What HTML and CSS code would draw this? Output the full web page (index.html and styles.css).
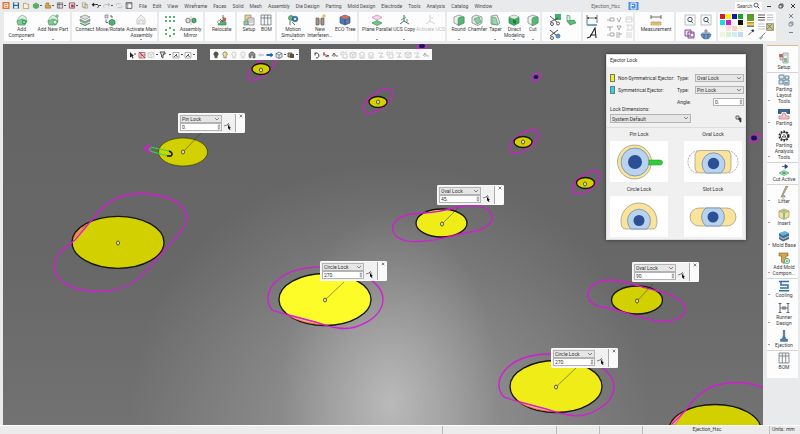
FILE: index.html
```
<!DOCTYPE html>
<html lang="en">
<head>
  <meta charset="UTF-8" />
  <meta name="viewport" content="width=device-width, initial-scale=1.0"/>
  <title>Ejection_Hsc</title>
  <link rel="stylesheet" href="styles.css">
</head>
<body>
  <svg class="defs" aria-hidden="true">
    <!-- general -->
    <symbol id="chev" viewBox="0 0 6 4"><path d="M1 1l2 2 2-2" fill="none" stroke="#555" stroke-width=".7"/></symbol>
    <symbol id="spin" viewBox="0 0 4 8"><path d="M0 0h4v8H0z" fill="#e4e4e4"/><path d="M.8 3L2 1.4 3.2 3zM.8 5L2 6.6 3.2 5z" fill="#333"/><path d="M0 4h4" stroke="#aaa" stroke-width=".4"/></symbol>
    <symbol id="pick" viewBox="0 0 8 8"><path d="M0 4l3-1 2-2M3 3h3" stroke="#555" stroke-width=".7" fill="none"/><path d="M4 3l3 3H5.800l.7 1.600-1 .4L5 6.500 4 7z" fill="#111"/></symbol>
    <symbol id="cursor" viewBox="0 0 8 8"><path d="M1 1l4 4H3.500l1 2-1 .4-.800-2L1 6.500z" fill="#222"/><path d="M5 2l2 2M7 2L5 4" stroke="#b55" stroke-width=".7"/></symbol>
    <symbol id="redbox" viewBox="0 0 8 8"><path d="M1 1.500h6v5.500H1zM3 1.500V7M3 4h4" fill="#f6e4e4" stroke="#a44" stroke-width=".7"/><path d="M1 1l6 6" stroke="#a22" stroke-width=".8"/></symbol>
    <symbol id="faint" viewBox="0 0 8 8"><path d="M1 2l3-1 3 1v4L4 7 1 6zM1 2l3 1.500L7 2M4 3.500V7" fill="#f3f3f3" stroke="#c2c2c2" stroke-width=".7"/></symbol>
    <symbol id="faint2" viewBox="0 0 8 8"><path d="M1 1h3v3H1zM5 3h2v4H3V5M5 1h2" fill="none" stroke="#c4c4c4" stroke-width=".8"/></symbol>
    <symbol id="faint3" viewBox="0 0 8 8"><path d="M1 3l3-2 3 2M2 3v4h4V3M4 4v3" fill="none" stroke="#c4c4c4" stroke-width=".8"/></symbol>
    <symbol id="faint4" viewBox="0 0 8 8"><path d="M1 2h5L4 4v3M2 6h5" fill="none" stroke="#c4c4c4" stroke-width=".8"/></symbol>
    <symbol id="filter" viewBox="0 0 8 8"><path d="M1 1h5L4 4v3L2.500 6V4zM4 4l3-2" fill="#ddd" stroke="#333" stroke-width=".8"/></symbol>
    <symbol id="boxsel" viewBox="0 0 8 8"><path d="M1 1.500h6V7H1z" fill="#fff" stroke="#666" stroke-width=".5"/><path d="M2 6l3-3M4 4l1.500 2" stroke="#222" stroke-width=".8"/></symbol>
    <symbol id="bulb" viewBox="0 0 8 8"><path d="M4 .8a2.300 2.300 0 0 1 1.200 4.200v1.800H2.800V5A2.300 2.300 0 0 1 4 .8z" fill="currentColor" stroke="#444" stroke-width=".5"/></symbol>
    <symbol id="bulb0" viewBox="0 0 8 8"><path d="M4 .8a2.300 2.300 0 0 1 1.200 4.200v1.800H2.800V5A2.300 2.300 0 0 1 4 .8z" fill="#f2f2f2" stroke="#bbb" stroke-width=".6"/></symbol>
    <symbol id="hide" viewBox="0 0 8 8"><path d="M1 6V3l2-2h2l2 2v4H5V4H3v3z" fill="#8a9689" stroke="#444" stroke-width=".6"/></symbol>
    <symbol id="left" viewBox="0 0 8 8"><path d="M1 4l2.500-2v1.300H7v1.400H3.500V6z" fill="#bcd"/></symbol>
    <symbol id="right" viewBox="0 0 8 8"><path d="M7.500 4L4.500 1.500V3H.5v2h4v1.500z" fill="#1d62b5"/></symbol>
    <symbol id="cube" viewBox="0 0 8 8"><path d="M1 2.500L4 1l3 1.500v3.500L4 7.500 1 6zM1 2.500L4 4l3-1.500M4 4v3.500" fill="#e8eef2" stroke="#345" stroke-width=".6"/></symbol>
    <symbol id="render" viewBox="0 0 8 8"><path d="M1 2h4v4H1z" fill="#b99a5a" stroke="#333" stroke-width=".7"/><path d="M3 3h4v4H3z" fill="#554" /></symbol>
    <symbol id="turn" viewBox="0 0 8 8"><path d="M2 2.500a2.500 2.500 0 1 1 1 4.500M2 4.500V1.500" fill="none" stroke="#333" stroke-width=".9"/></symbol>
    <symbol id="axis" viewBox="0 0 8 8"><path d="M2 1v4M4 3v3l2-2M1 3h2" fill="none" stroke="#a23a3a" stroke-width=".9"/><path d="M5 4l1 3 1-3z" fill="#444"/></symbol>
    <symbol id="snap" viewBox="0 0 8 8"><path d="M1 5l2-3 2 3h2M3 2v4" fill="none" stroke="#555" stroke-width=".8"/></symbol>

    <!-- quick access bar -->
    <symbol id="app" viewBox="0 0 8 8"><path d="M0 0h8v8H0z" fill="#d9742b"/><path d="M2 2h4v4H2z" fill="none" stroke="#fff" stroke-width=".9"/><path d="M3 4h3" stroke="#fff"/></symbol>
    <symbol id="save" viewBox="0 0 8 8"><path d="M.5.500h7v7h-7z" fill="#2a6a94"/><path d="M2 .5h4V3H2zM2 4.500h4v3H2z" fill="#e9f1f5"/></symbol>
    <symbol id="doc" viewBox="0 0 8 8"><path d="M1 1.500h3l1 1h2v5H1z" fill="#f9f0dc" stroke="#9a7b3e" stroke-width=".7"/></symbol>
    <symbol id="gpart" viewBox="0 0 8 8"><path d="M1 3l3-2 3 2v3L4 7.500 1 6z" fill="#61bd78" stroke="#2d7a43" stroke-width=".6"/><path d="M1 3l3 1.500L7 3M4 4.500v3" fill="none" stroke="#2d7a43" stroke-width=".5"/></symbol>
    <symbol id="opart" viewBox="0 0 8 8"><path d="M2 1h3v3h2v3H1V4z" fill="#d3a64a" stroke="#7d6125" stroke-width=".6"/></symbol>
    <symbol id="sheet" viewBox="0 0 8 8"><path d="M1 1h6v6H1zM1 3h6M3 1v6" fill="#dfe3e0" stroke="#444" stroke-width=".7"/></symbol>
    <symbol id="rsheet" viewBox="0 0 8 8"><path d="M1 1h6v6H1z" fill="#efdada" stroke="#7a3140" stroke-width=".8"/><path d="M3 3h3v3H3z" fill="#a33a4d"/></symbol>
    <symbol id="copy" viewBox="0 0 8 8"><path d="M1 1h4v5H1zM3 3h4v4H3z" fill="#f7ecd6" stroke="#8c7956" stroke-width=".6"/></symbol>
    <symbol id="undo" viewBox="0 0 8 8"><path d="M2 3h3a2 2 0 0 1 2 3.500" fill="none" stroke="#222" stroke-width="1.100"/><path d="M0 3l3-2.500v5z" fill="#222"/></symbol>
    <symbol id="redo" viewBox="0 0 8 8"><path d="M6 3H3a2 2 0 0 0-2 3.500" fill="none" stroke="#bbb"/><path d="M8 3L5 .5v5z" fill="#bbb"/></symbol>
    <symbol id="cycle" viewBox="0 0 8 8"><path d="M1 4V2h5M7 4v2.500H2" fill="none" stroke="#bbb" stroke-width=".9"/></symbol>
    <symbol id="panel" viewBox="0 0 8 8"><path d="M.7.700h6.600v6.600H.7z" fill="#fff" stroke="#333" stroke-width=".8"/><path d="M.7 2h6.600M2.500 2v5" stroke="#333" stroke-width=".6"/></symbol>
    <symbol id="bluedoc" viewBox="0 0 10 8"><path d="M0 0h10v8H0z" fill="#4b8fdd"/><path d="M2.500 1h5v6h-5zM2.500 3.500h3" fill="none" stroke="#fff" stroke-width=".9"/></symbol>
    <symbol id="loupe" viewBox="0 0 8 8"><circle cx="3.500" cy="3.500" r="2.300" fill="none" stroke="#333" stroke-width=".9"/><path d="M5.200 5.200L7.300 7.300" stroke="#333"/></symbol>
    <symbol id="min" viewBox="0 0 6 6"><path d="M1 3.500h4" stroke="currentColor" stroke-width=".9"/></symbol>
    <symbol id="max" viewBox="0 0 6 6"><path d="M1 2h3v3H1zM2 2V1h3v3H4" fill="none" stroke="currentColor" stroke-width=".7"/></symbol>
    <symbol id="close" viewBox="0 0 6 6"><path d="M1 1l4 4M5 1L1 5" stroke="currentColor" stroke-width=".9"/></symbol>

    <!-- ribbon -->
    <symbol id="addcomp" viewBox="0 0 12 12"><path d="M1 7l2-4 3-2 4 2 1 4-2 3H3z" fill="#d9efdf" stroke="#6a9f7c" stroke-width=".6"/><path d="M1 7l5-2 5 2-2 4H2z" fill="#7fcb94" stroke="#3c8a55" stroke-width=".6"/><circle cx="8" cy="8" r="2.200" fill="#2f9e50"/><path d="M8 6.800v2.400M6.800 8h2.400" stroke="#fff" stroke-width=".6"/></symbol>
    <symbol id="newpart" viewBox="0 0 12 12"><path d="M1 7l2-4 3-2 4 2 1 4-2 3H3z" fill="#d9efdf" stroke="#6a9f7c" stroke-width=".6"/><path d="M1 7l5-2 5 2-2 4H2z" fill="#7fcb94" stroke="#3c8a55" stroke-width=".6"/><circle cx="8" cy="8" r="2" fill="#fff" stroke="#2f9e50" stroke-width=".8"/><path d="M10 0v4M8 2h4" stroke="#4caf6b" stroke-width=".9"/></symbol>
    <symbol id="connect" viewBox="0 0 12 12"><path d="M1 3l5-2 5 2-5 2.500z" fill="#dfe4e2" stroke="#68756f" stroke-width=".6"/><path d="M1 5l5 2.500L11 5v2L6 9.500 1 7z" fill="#9da9a3" stroke="#5f6b66" stroke-width=".5"/><path d="M1 9l5 2.300L11 9" fill="none" stroke="#3faa60" stroke-width="1.200"/></symbol>
    <symbol id="move" viewBox="0 0 12 12"><path d="M1 1h3v3H1z" fill="#d9dedb" stroke="#667" stroke-width=".6"/><path d="M5 7l3-2 3 2v3l-3 1.500L5 10z" fill="#4fb26c" stroke="#27743f" stroke-width=".6"/><path d="M2 5.500v3h2M6 2h2v2" fill="none" stroke="#444" stroke-width=".8"/></symbol>
    <symbol id="actmain" viewBox="0 0 12 12"><path d="M2 10V5l4-4 4 4v5zM4 10V6h4v4" fill="#f1f1f1" stroke="#c4c4c4" stroke-width=".9"/></symbol>
    <symbol id="pattern" viewBox="0 0 12 24"><g fill="#59b277"><path d="M1 1h2v2H1zM5 1h2v2H5zM9 1h2v2H9zM1 5h2v2H1zM5 5h2v2H5zM9 5h2v2H9zM5 12h2v2H5zM1 14h2v2H1zM9 14h2v2H9zM1 18h2v2H1zM9 18h2v2H9zM5 20h2v2H5z"/></g></symbol>
    <symbol id="mirror" viewBox="0 0 12 12"><path d="M1 5l2-1 2 1v3L3 9 1 8z" fill="#e2e5e3" stroke="#555" stroke-width=".7"/><path d="M7 5l2-1 2 1v3L9 9 7 8z" fill="#4caf6b" stroke="#27743f" stroke-width=".7"/><path d="M6 2v9" stroke="#777" stroke-width=".4"/></symbol>
    <symbol id="relocate" viewBox="0 0 12 12"><path d="M3 8l3-1.500L10 8v3H2z" fill="#52b56f" stroke="#2c7d46" stroke-width=".6"/><path d="M7 1v6M4 5l3 3" stroke="#3f4f48" stroke-width=".8"/><path d="M7 3l3 1v3H7z" fill="#cf5a52"/><circle cx="3" cy="8" r="1.500" fill="#fff" stroke="#555" stroke-width=".5"/></symbol>
    <symbol id="setup" viewBox="0 0 12 12"><path d="M2 1h6v5H2z" fill="#e6d39b" stroke="#857445" stroke-width=".6"/><path d="M5 4h6v7H5z" fill="#edf0ef" stroke="#666" stroke-width=".6"/><path d="M1 7h4v4H1z" fill="#9cc9a8" stroke="#4a7e58" stroke-width=".6"/><path d="M6 6h4M6 8h4" stroke="#888" stroke-width=".6"/></symbol>
    <symbol id="setup2" viewBox="0 0 12 12"><path d="M5 1h5v10H5z" fill="#eef0ef" stroke="#777" stroke-width=".6"/><path d="M6 6h3v4H6z" fill="#7cc08d"/><path d="M1 2h4v3H1z" fill="#c9685c"/><path d="M2 5h3v3H2z" fill="#d6dcd8" stroke="#777" stroke-width=".5"/><path d="M6 3h3" stroke="#888" stroke-width=".6"/></symbol>
    <symbol id="bom" viewBox="0 0 12 12"><path d="M1 1h10v10H1zM1 4h10M4.300 1v10M7.700 1v10" fill="#f7f8f8" stroke="#5c666b" stroke-width=".7"/></symbol>
    <symbol id="motion" viewBox="0 0 12 12"><circle cx="4" cy="4" r="2.500" fill="#67b97f" stroke="#2e6f46" stroke-width=".6"/><circle cx="8" cy="5" r="2.800" fill="#3f7fb8" stroke="#234f7b" stroke-width=".6"/><circle cx="8" cy="5" r="1" fill="#fff"/><path d="M3 7v4M5 8l3 3" stroke="#555" stroke-width=".9"/></symbol>
    <symbol id="interf" viewBox="0 0 12 12"><path d="M2 4h3v7H2zM7 4h3v7H7z" fill="#8e9aa0" stroke="#4c565b" stroke-width=".6"/><path d="M5 5h2v5H5z" fill="#e0a443"/><path d="M10 0v4M8 2h4" stroke="#e5b52d" stroke-width="1"/></symbol>
    <symbol id="eco" viewBox="0 0 12 12"><path d="M1 3l5-2 5 2v6l-5 2-5-2z" fill="#4d78b0" stroke="#2a4a78" stroke-width=".6"/><path d="M1 3l5-2 5 2-5 2z" fill="#dc6b5c"/><path d="M6 5v6" stroke="#223d66" stroke-width=".6"/><path d="M7 7l3 2" stroke="#e06d55"/></symbol>
    <symbol id="parallel" viewBox="0 0 12 12"><path d="M1 3.500L6 1l5 2.500L6 6z" fill="#f7ddef" stroke="#d078b0" stroke-width=".7"/><path d="M1 9l5-2.500L11 9l-5 2.500z" fill="#71c58a" stroke="#379355" stroke-width=".7"/></symbol>
    <symbol id="ucs" viewBox="0 0 12 12"><path d="M6 1v6l-4 3M6 7l5 3" fill="none" stroke="#456" stroke-width=".9"/><path d="M3 6l5-3M9 5v3" stroke="#3fa05d" stroke-width=".9"/></symbol>
    <symbol id="ucs0" viewBox="0 0 12 12"><path d="M6 1v6l-4 3M6 7l5 3M8 3v2" fill="none" stroke="#ccc" stroke-width=".9"/></symbol>
    <symbol id="solid" viewBox="0 0 12 12"><path d="M1 3l5-2 5 2v6l-5 2.500L1 9z" fill="#edf1ee" stroke="#61706a" stroke-width=".6"/><path d="M5 4.500Q6 2 11 3v6l-6 2.500z" fill="#56b877" stroke="#3b8a57" stroke-width=".5"/></symbol>
    <symbol id="chamfer" viewBox="0 0 12 12"><path d="M1 3l4-2 6 2v6l-4 2.500L1 9z" fill="#e2e7e4" stroke="#61706a" stroke-width=".6"/><path d="M3 5l5-2 2 5-4 2z" fill="#8bcf9f" stroke="#3b8a57" stroke-width=".5"/></symbol>
    <symbol id="taper" viewBox="0 0 12 12"><path d="M2 2l6-1 3 8-3 2-6-1z" fill="#e2e7e4" stroke="#61706a" stroke-width=".6"/><path d="M3 3l4 1 2 7-6-1z" fill="#9bd8ad" stroke="#3b8a57" stroke-width=".5"/></symbol>
    <symbol id="direct" viewBox="0 0 12 12"><path d="M1 3l5-2 5 2v6l-5 2.500L1 9z" fill="#3fae63" stroke="#2c6d44" stroke-width=".6"/><path d="M1 3l5-2 5 2-5 2z" fill="#e5eae7"/><path d="M5 5l3 2v3L5 9z" fill="#1f7c40"/></symbol>
    <symbol id="scissors" viewBox="0 0 12 12"><path d="M6 0h6v6H6z" fill="#45ae66"/><path d="M1 2l7 6M1 8l8-4" stroke="#333" stroke-width=".8"/><circle cx="3" cy="10" r="1.500" fill="none" stroke="#333" stroke-width=".8"/><circle cx="9" cy="9.500" r="1.500" fill="none" stroke="#333" stroke-width=".8"/></symbol>
    <symbol id="scissorb" viewBox="0 0 12 12"><path d="M1 2l7 6M1 8l8-6" stroke="#333" stroke-width=".9"/><circle cx="3" cy="10" r="1.500" fill="none" stroke="#333" stroke-width=".8"/><circle cx="9" cy="8" r="2" fill="#5b9ace" stroke="#2f618c" stroke-width=".7"/></symbol>
    <symbol id="fold" viewBox="0 0 12 12"><path d="M2 1l3 1v6L2 7z" fill="#d7efdd" stroke="#4e9a66" stroke-width=".7"/><path d="M2 7l7-1 2 3-6 2z" fill="#5cba79" stroke="#2e7f48" stroke-width=".6"/></symbol>
    <symbol id="dim" viewBox="0 0 12 12"><path d="M1 1v10M11 1v8M1 4h10" fill="none" stroke="#333" stroke-width=".7"/><path d="M1 4l2-1v2zM11 4L9 3v2z" fill="#333"/><path d="M1 10h10v2H1z" fill="#6ba6c4"/></symbol>
    <symbol id="bigA" viewBox="0 0 12 12"><path d="M1 11l3-1L9 1l1 10M4 8h5" fill="none" stroke="#222" stroke-width="1.100"/></symbol>
    <symbol id="annot" viewBox="0 0 27 24"><g fill="none" stroke="#888" stroke-width=".7"><path d="M1 5h3M4 3h4v3H4zM11 3l2 4 2-5M1 12h6M4 12v4M11 11l2 4 2-4zM1 20h2M4 18h4v3H4zM11 17v6M13 17v6M16 19h-3"/></g><g fill="none" stroke="#ccc" stroke-width=".8"><path d="M20 2h6v5h-6zM20 4h6M20 10h6v5h-6M22 10v5M20 18h6M20 20h6M20 22h6"/></g></symbol>
    <symbol id="ruler" viewBox="0 0 12 12"><path d="M1 1v4M11 1v4M1 3h10" stroke="#333" stroke-width=".7"/><path d="M1 8h10v3H1z" fill="#eed08f" stroke="#b48d3d" stroke-width=".6"/><path d="M3 8v2M5 8v2M7 8v2M9 8v2" stroke="#8d6b2c" stroke-width=".4"/></symbol>
    <symbol id="query" viewBox="0 0 12 12"><path d="M1 1h10v10H1z" fill="#fbfbfb" stroke="#999" stroke-width=".6"/><circle cx="6" cy="5.500" r="2.200" fill="none" stroke="#345" stroke-width=".9"/><path d="M7.300 7.300l1.700 2" stroke="#345" stroke-width=".9"/></symbol>
    <symbol id="purple" viewBox="0 0 12 12"><path d="M1 2h6v6H1zM4 4h6v6H4z" fill="#ead9ee" stroke="#7b458c" stroke-width=".9"/><circle cx="8" cy="7" r="2" fill="#fff" stroke="#7b458c" stroke-width=".8"/></symbol>
    <symbol id="ball" viewBox="0 0 12 12"><path d="M1 6h10a5 5 0 0 1-10 0z" fill="#5f9ccb" stroke="#2c5f8d" stroke-width=".6"/><path d="M2 5h8M6 1v4M4 3h4M4 6v5M8 6v5" stroke="#436" stroke-width=".6"/></symbol>
    <symbol id="lines" viewBox="0 0 16 8"><path d="M0 1h7M0 3.500h7M0 6h7" stroke="#555" stroke-width="1"/><path d="M9 1h6M9 3.500h6M9 6h6" stroke="#9ab" stroke-width=".8"/></symbol>
    <symbol id="hatch" viewBox="0 0 16 8"><path d="M0 1h7M0 3.500h7M0 6h7" stroke="#bbb" stroke-width=".8"/><path d="M8.500.500h7v7h-7z" fill="#c6be8b" stroke="#776" stroke-width=".6"/><path d="M9 1l6 6M14 1L9 6" stroke="#6a7a40" stroke-width=".7"/></symbol>
    <symbol id="dropper" viewBox="0 0 12 12"><path d="M2 10l5-5" stroke="#444" stroke-width="1.200"/><path d="M6 3l3 3 2-3-2-2z" fill="#333"/></symbol>
    <symbol id="brush" viewBox="0 0 12 12"><path d="M11 1L6 6" stroke="#444"/><path d="M2 9l4-3 1 2-3 3z" fill="#8fcf9e" stroke="#3a7a4b" stroke-width=".6"/></symbol>

    <!-- side bar -->
    <symbol id="layout" viewBox="0 0 12 12"><path d="M1 1h5v4H1zM7 2h4v3H7zM1 6h4v4H1zM6 6h5v5H6z" fill="#d9e5ed" stroke="#3f617c" stroke-width=".7"/><path d="M7 9h3" stroke="#3f617c"/></symbol>
    <symbol id="parting" viewBox="0 0 12 12"><path d="M0 1h12v5H9L8 4H4L3 6H0z" fill="#3c6689"/><path d="M1 11V8h3l1-3h2l1 3h3v3z" fill="#f1c4cb" stroke="#b06e7a" stroke-width=".6"/></symbol>
    <symbol id="gear" viewBox="0 0 12 12"><circle cx="6" cy="6" r="4.700" fill="none" stroke="#222" stroke-width="1.600" stroke-dasharray="1.800 1.200"/><circle cx="6" cy="6" r="3.700" fill="#fff" stroke="#222" stroke-width=".9"/><path d="M4.500 7.500V6M6 8V4M7.500 7.500V5.500" stroke="#222" stroke-width=".8"/></symbol>
    <symbol id="cutact" viewBox="0 0 12 12"><path d="M4 2.500h4M7 .5l3 2-3 2z" stroke="#2a4b7c" fill="#2a4b7c" stroke-width=".8"/><path d="M1 9l5-2.500L11 9l-5 2.500z" fill="#b8e6c6" stroke="#3da361" stroke-width=".7"/><ellipse cx="6" cy="9" rx="2" ry="1" fill="#3da361"/></symbol>
    <symbol id="lifter" viewBox="0 0 12 12"><path d="M8 0h2L5 9l2 1v1H3l1-2z" fill="#c4bd93" stroke="#777046" stroke-width=".6"/></symbol>
    <symbol id="insert" viewBox="0 0 12 12"><path d="M1 3l5-2 5 2v6l-5 2.500L1 9z" fill="#f2df9f" stroke="#9d8745" stroke-width=".6"/><path d="M1 3l5 2 5-2" fill="none" stroke="#9d8745" stroke-width=".6"/><path d="M3 3l3-1.200L9 3 6 4zM5 5h2v6H5z" fill="#79c592"/></symbol>
    <symbol id="moldbase" viewBox="0 0 12 12"><path d="M1 3l6-2 4 2-6 2.500z" fill="#6ab1dd"/><path d="M1 3l4 2.500L11 3v3L5 8.500 1 6z" fill="#2e78ad"/><path d="M1 6l4 2.500L11 6v1L5 9.500 1 7z" fill="#dc9a59"/><path d="M1 7l4 2.500L11 7v2l-6 2.500L1 9z" fill="#3d6f96"/></symbol>
    <symbol id="addmold" viewBox="0 0 12 12"><path d="M1 1h9v3H8v6l-2 1.500L3.500 10V4H1z" fill="#d4a451" stroke="#80602a" stroke-width=".6"/><circle cx="9" cy="9" r="2.600" fill="#fff" stroke="#3da35c" stroke-width=".8"/><path d="M9 7.500v3M7.500 9h3" stroke="#3da35c" stroke-width=".8"/></symbol>
    <symbol id="cooling" viewBox="0 0 12 12"><path d="M1 1.500h10M3 1.500V5h7v3H2M1 10.700h10" fill="none" stroke="#326ea8" stroke-width="1.500"/></symbol>
    <symbol id="runner" viewBox="0 0 12 12"><path d="M2 1v10M10 1v10M2 6h8M.5 1.500h3M8.500 1.500h3M.5 10.500h3M8.500 10.500h3M5 4v4M7 4v4" fill="none" stroke="#555c60" stroke-width=".9"/></symbol>
    <symbol id="eject" viewBox="0 0 12 12"><path d="M5.200 0h1.600v6L8 9h1.500v2.500h-7V9H4l1.200-3z" fill="#4f7fa9" stroke="#2d5275" stroke-width=".4"/></symbol>
    <symbol id="pins" viewBox="0 0 8 8"><path d="M1 1h3v3H1z" fill="#ddd" stroke="#333" stroke-width=".7"/><path d="M4 3h2v4H5zM3 4l2 1" fill="#555" stroke="#222" stroke-width=".6"/></symbol>
  </svg>

  <header class="titlebar">
    <div class="quick">
      <svg><use href="#app"/></svg>
      <button aria-label="Save"><svg><use href="#save"/></svg></button>
      <button aria-label="New"><svg><use href="#doc"/></svg></button>
      <button class="drop" aria-label="Part"><svg><use href="#gpart"/></svg></button>
      <button class="drop" aria-label="Assembly"><svg><use href="#opart"/></svg></button>
      <button class="drop" aria-label="Drawing"><svg><use href="#sheet"/></svg></button>
      <button class="drop" aria-label="NC"><svg><use href="#rsheet"/></svg></button>
      <button aria-label="Copy"><svg><use href="#copy"/></svg></button>
      <button class="drop" aria-label="Undo"><svg><use href="#undo"/></svg></button>
      <button class="drop" aria-label="Redo"><svg><use href="#redo"/></svg></button>
      <button aria-label="Repeat"><svg><use href="#cycle"/></svg></button>
      <button aria-label="Panel"><svg><use href="#panel"/></svg></button>
    </div>
    <nav class="menu">
      <a href="#">File</a>
      <a href="#">Edit</a>
      <a href="#">View</a>
      <a href="#">Wireframe</a>
      <a href="#">Faces</a>
      <a href="#">Solid</a>
      <a href="#">Mesh</a>
      <a href="#">Assembly</a>
      <a href="#">Die Design</a>
      <a href="#">Parting</a>
      <a href="#">Mold Design</a>
      <a href="#">Electrode</a>
      <a href="#">Tools</a>
      <a href="#">Analysis</a>
      <a href="#">Catalog</a>
      <a href="#">Window</a>
    </nav>
    <div class="docname">Ejection_Hsc <svg><use href="#bluedoc"/></svg></div>
    <div class="search">
      <input type="text" placeholder="Search" aria-label="Search">
      <svg><use href="#loupe"/></svg>
    </div>
    <div class="winbtns">
      <button aria-label="Minimize"><svg><use href="#min"/></svg></button>
      <button aria-label="Restore"><svg><use href="#max"/></svg></button>
      <button aria-label="Close"><svg><use href="#close"/></svg></button>
    </div>
  </header>

  <div class="ribbon">
    <div class="group">
      <button class="tool more"><svg><use href="#addcomp"/></svg>Add<br>Component</button>
      <button class="tool more"><svg><use href="#newpart"/></svg>Add New Part</button>
    </div>
    <div class="group">
      <button class="tool"><svg><use href="#connect"/></svg>Connect</button>
      <button class="tool"><svg><use href="#move"/></svg>Move/Rotate</button>
      <button class="tool more"><svg><use href="#actmain"/></svg>Activate Main<br>Assembly</button>
    </div>
    <div class="group">
      <button class="tall" aria-label="Pattern"><svg><use href="#pattern"/></svg></button>
      <button class="tool"><svg><use href="#mirror"/></svg>Assembly<br>Mirror</button>
    </div>
    <div class="group">
      <button class="tool"><svg><use href="#relocate"/></svg>Relocate</button>
    </div>
    <div class="group">
      <button class="tool"><svg><use href="#setup"/></svg>Setup</button>
      <button class="tool"><svg><use href="#bom"/></svg>BOM</button>
    </div>
    <div class="group">
      <button class="tool more"><svg><use href="#motion"/></svg>Motion<br>Simulation</button>
      <button class="tool more"><svg><use href="#interf"/></svg>New<br>Interferen...</button>
      <button class="tool"><svg><use href="#eco"/></svg>ECO Tree</button>
    </div>
    <div class="group">
      <button class="tool more"><svg><use href="#parallel"/></svg>Plane Parallel</button>
      <button class="tool more"><svg><use href="#ucs"/></svg>UCS Copy</button>
      <button class="tool" disabled><svg><use href="#ucs0"/></svg>Activate UCS</button>
    </div>
    <div class="group">
      <button class="tool more"><svg><use href="#solid"/></svg>Round</button>
      <button class="tool"><svg><use href="#chamfer"/></svg>Chamfer</button>
      <button class="tool more"><svg><use href="#taper"/></svg>Taper</button>
      <button class="tool more"><svg><use href="#direct"/></svg>Direct<br>Modeling</button>
      <button class="tool more"><svg><use href="#solid"/></svg>Cut</button>
    </div>
    <div class="group icons">
      <button aria-label="Trim"><svg><use href="#scissors"/></svg></button>
      <button aria-label="Fold"><svg><use href="#fold"/></svg></button>
      <button aria-label="Split"><svg><use href="#scissorb"/></svg></button>
    </div>
    <div class="group annot">
      <div class="stack">
        <button aria-label="Dimension"><svg><use href="#dim"/></svg></button>
        <button aria-label="Text"><svg><use href="#bigA"/></svg></button>
      </div>
      <button class="tall wide" aria-label="Annotations"><svg><use href="#annot"/></svg></button>
    </div>
    <div class="group">
      <button class="tool"><svg><use href="#ruler"/></svg>Measurement</button>
    </div>
    <div class="group icons">
      <button aria-label="Query"><svg><use href="#query"/></svg></button>
      <button aria-label="Query all"><svg><use href="#query"/></svg></button>
      <button aria-label="Compare"><svg><use href="#purple"/></svg></button>
      <button aria-label="View ball"><svg><use href="#ball"/></svg></button>
    </div>
    <div class="group colors">
      <div class="swatches">
        <i class="red"></i><i class="yellow"></i><i class="navy"></i><i class="green"></i>
        <i class="cyan"></i><i class="magenta"></i><i></i><i class="black"></i>
        <i></i><i class="p1"></i><i class="p2"></i><i class="p3"></i>
        <i class="p4"></i><i class="p5"></i><i class="p6"></i><i class="p7"></i>
      </div>
      <div class="current"><i></i><i></i><svg><use href="#dropper"/></svg></div>
      <div class="styles">
        <svg><use href="#lines"/></svg>
        <svg><use href="#hatch"/></svg>
        <svg class="brush"><use href="#brush"/></svg>
      </div>
    </div>
    <div class="docbtns">
      <button aria-label="Close document"><svg><use href="#close"/></svg></button>
      <button aria-label="Restore document"><svg><use href="#max"/></svg></button>
      <button aria-label="Minimize document"><svg><use href="#min"/></svg></button>
    </div>
  </div>

  <main>
    <div class="viewport">
      <svg class="scene" viewBox="3 44 760 381" preserveAspectRatio="xMinYMin slice">
        <!-- small ejectors in the back -->
        <g class="ring">
          <ellipse cx="261" cy="69" rx="16" ry="7" transform="rotate(-38 261 69)"/>
          <ellipse cx="378" cy="101" rx="17" ry="8" transform="rotate(-36 378 101)"/>
          <ellipse cx="524" cy="141.500" rx="17" ry="8" transform="rotate(-35 524 141.500)"/>
          <ellipse cx="586" cy="182.500" rx="16" ry="8" transform="rotate(-36 586 182.500)"/>
          <ellipse cx="536" cy="77" rx="5" ry="3" transform="rotate(-45 536 77)"/>
          <ellipse cx="755" cy="138" rx="6" ry="3" transform="rotate(-35 755 138)"/>
          <ellipse cx="422" cy="46" rx="5" ry="2" transform="rotate(-20 422 46)"/>
        </g>
        <g class="tiny">
          <ellipse cx="536" cy="77" rx="2.500" ry="2"/>
          <ellipse cx="754" cy="138" rx="3" ry="2.500"/>
          <ellipse cx="422" cy="46" rx="3" ry="2"/>
        </g>
        <g class="pin dim">
          <ellipse cx="261" cy="69" rx="9" ry="5.500"/>
          <ellipse cx="378" cy="102" rx="9" ry="5.500"/>
          <ellipse cx="523" cy="142" rx="9" ry="5.500"/>
          <ellipse cx="585.500" cy="183" rx="9" ry="5.500"/>
        </g>

        <!-- oval lock, left -->
        <ellipse class="pin dim" cx="118" cy="242.300" rx="46" ry="26"/>
        <path class="flat" d="M73 239L86 225Q77 230 73 239z"/>
        <path class="ring" d="M75 240L96 215C104 204 116 194 140 193.500C166 194 187 203 186.500 219C185 232 165 248 157 259C147 268 141 280 126 286C116 291 106 291.500 97 291.500C74 291 54 282 54 266C55 254 65 248 75 240z"/>

        <!-- pin lock -->
        <ellipse class="pin dim thin" cx="183" cy="152" rx="24.500" ry="14"/>
        <path class="pinlock" d="M172 154a3 2.500 0 0 1-4 2L150 151v-4l19 4"/>
        <path class="ringthick" d="M151 147l-4-1-2 3 6 4"/>
        <path class="pinend" d="M169 151q5 2 2 5l-4 0"/>

        <!-- oval lock 45 -->
        <ellipse class="pin bright" cx="441.500" cy="223" rx="25.500" ry="14"/>
        <path class="ring" d="M424 213C405 213 393 219 392.500 228C393 237 402 242 415 241.500C440 241 452 235 470 232C487 230 493 222 492 216C489 206 475 204 458 207C447 210 439 212 424 213z"/>

        <!-- circle lock, centre -->
        <ellipse class="pin lit" cx="325" cy="299.500" rx="46" ry="26"/>
        <path class="flat" d="M287 315Q302 324 327 325z"/>
        <path class="ring" d="M272 310C260 295 274 266 325 267C362 268 383 284 383 300C382 318 357 331 338 328Q325 326 316 322L285 314z"/>

        <!-- oval lock 90 -->
        <ellipse class="pin dim" cx="637" cy="300" rx="25.500" ry="14"/>
        <path class="ring" d="M588 297C586 286 598 280 611 280C624 281 640 287 658 291C676 295 686 303 685 311C682 320 667 323 655 321C638 317 625 312 608 308C596 307 590 303 588 297z"/>

        <!-- circle lock, right -->
        <ellipse class="pin bright" cx="556" cy="386.500" rx="46" ry="26"/>
        <path class="flat" d="M518 402Q533 411 558 412z"/>
        <path class="ring" d="M504 397C490 383 505 354 551 354C588 354 614 370 614 387C613 405 588 419 569 415Q556 413 547 409L516 401z"/>

        <!-- cut off at the corner -->
        <ellipse class="pin dim" cx="715" cy="430" rx="46" ry="25.500"/>
        <path class="flat" d="M671 425Q674 417 684 412L675 425z"/>
        <path class="ring" d="M672 424L686 410C698 392 712 382 738 382.500Q754 383 764 388"/>

        <g class="leader">
          <path d="M183 152L201 133M442 224l16-16M325 300l19-18M637 301l16-17M556 387l20-19"/>
        </g>
        <g class="mark">
          <ellipse cx="261" cy="70" rx="1.500" ry="2"/>
          <ellipse cx="378" cy="102" rx="1.500" ry="2"/>
          <ellipse cx="523" cy="142" rx="1.500" ry="2"/>
          <ellipse cx="585" cy="184" rx="1.500" ry="2"/>
          <ellipse cx="118" cy="243" rx="1.500" ry="2"/>
          <ellipse cx="183" cy="152" rx="1.500" ry="2"/>
          <ellipse cx="442" cy="224" rx="1.500" ry="2"/>
          <ellipse cx="325" cy="300" rx="1.500" ry="2"/>
          <ellipse cx="637" cy="301" rx="1.500" ry="2"/>
          <ellipse cx="556" cy="387" rx="1.500" ry="2"/>
        </g>
      </svg>

      <div class="floatbar bar1">
        <svg><use href="#cursor"/></svg><svg><use href="#redbox"/></svg><svg><use href="#faint"/></svg><b></b>
        <svg><use href="#filter"/></svg><b></b><svg><use href="#boxsel"/></svg><b></b><svg><use href="#boxsel"/></svg><b></b>
      </div>
      <div class="floatbar bar2">
        <svg class="off"><use href="#bulb"/></svg><svg class="on"><use href="#bulb"/></svg><svg><use href="#bulb0"/></svg><svg><use href="#bulb0"/></svg><svg><use href="#hide"/></svg>
        <svg><use href="#left"/></svg><svg><use href="#right"/></svg><svg><use href="#cube"/></svg><b></b><svg><use href="#render"/></svg><b></b>
      </div>
      <div class="floatbar bar3">
        <svg><use href="#turn"/></svg><svg><use href="#axis"/></svg><svg><use href="#snap"/></svg><svg><use href="#faint2"/></svg><svg><use href="#faint"/></svg><svg><use href="#faint3"/></svg><svg><use href="#faint3"/></svg>
        <svg><use href="#faint4"/></svg><svg><use href="#faint2"/></svg><svg><use href="#faint4"/></svg><svg><use href="#faint"/></svg><svg><use href="#faint4"/></svg><svg class="soft"><use href="#snap"/></svg>
      </div>

      <div class="lockbox lock1">
        <div class="fields">
          <span class="sel"><select aria-label="Lock type"><option>Pin Lock</option></select><svg><use href="#chev"/></svg></span>
          <span class="num"><input type="text" value="0." aria-label="Angle"><svg><use href="#spin"/></svg></span>
        </div>
        <svg class="pick"><use href="#pick"/></svg>
        <button aria-label="Close"><svg><use href="#close"/></svg></button>
      </div>
      <div class="lockbox lock2">
        <div class="fields">
          <span class="sel"><select aria-label="Lock type"><option>Oval Lock</option></select><svg><use href="#chev"/></svg></span>
          <span class="num"><input type="text" value="45." aria-label="Angle"><svg><use href="#spin"/></svg></span>
        </div>
        <svg class="pick"><use href="#pick"/></svg>
        <button aria-label="Close"><svg><use href="#close"/></svg></button>
      </div>
      <div class="lockbox lock3">
        <div class="fields">
          <span class="sel"><select aria-label="Lock type"><option>Circle Lock</option></select><svg><use href="#chev"/></svg></span>
          <span class="num"><input type="text" value="270." aria-label="Angle"><svg><use href="#spin"/></svg></span>
        </div>
        <svg class="pick"><use href="#pick"/></svg>
        <button aria-label="Close"><svg><use href="#close"/></svg></button>
      </div>
      <div class="lockbox lock4">
        <div class="fields">
          <span class="sel"><select aria-label="Lock type"><option>Oval Lock</option></select><svg><use href="#chev"/></svg></span>
          <span class="num"><input type="text" value="90." aria-label="Angle"><svg><use href="#spin"/></svg></span>
        </div>
        <svg class="pick"><use href="#pick"/></svg>
        <button aria-label="Close"><svg><use href="#close"/></svg></button>
      </div>
      <div class="lockbox lock5">
        <div class="fields">
          <span class="sel"><select aria-label="Lock type"><option>Circle Lock</option></select><svg><use href="#chev"/></svg></span>
          <span class="num"><input type="text" value="270." aria-label="Angle"><svg><use href="#spin"/></svg></span>
        </div>
        <svg class="pick"><use href="#pick"/></svg>
        <button aria-label="Close"><svg><use href="#close"/></svg></button>
      </div>

      <section class="dialog">
        <h2>Ejector Lock</h2>
        <div class="types">
          <i class="key yellow"></i><span>Non-Symmetrical Ejector:</span><label for="type1">Type:</label>
          <span class="sel"><select id="type1"><option>Oval Lock</option></select><svg><use href="#chev"/></svg></span>
          <i class="key cyan"></i><span>Symmetrical Ejector:</span><label for="type2">Type:</label>
          <span class="sel"><select id="type2"><option>Pin Lock</option></select><svg><use href="#chev"/></svg></span>
          <label class="anglelabel" for="angle">Angle:</label>
          <span class="num angle"><input type="text" id="angle" value="0."><svg><use href="#spin"/></svg></span>
        </div>
        <div class="dims">
          <label for="dims">Lock Dimensions:</label>
          <span class="sel"><select id="dims"><option>System Default</option></select><svg><use href="#chev"/></svg></span>
          <svg class="pins"><use href="#pins"/></svg>
        </div>
        <div class="locks">
          <figure>
            <figcaption>Pin Lock</figcaption>
            <svg viewBox="0 0 58 41"><circle class="sand" cx="24.500" cy="21" r="17"/><circle class="sky" cx="25" cy="21" r="14"/><circle class="core" cx="25" cy="21" r="7"/><path d="M39 19h11a2 2 0 0 1 0 5H39z" fill="#2fd037" stroke="#258d2e" stroke-width=".5"/></svg>
          </figure>
          <figure>
            <figcaption>Oval Lock</figcaption>
            <svg viewBox="0 0 58 41"><path d="M14 10a10 11 0 0 0 0 22M44 10a10 11 0 0 1 0 22" fill="none" stroke="#555" stroke-width=".5" stroke-dasharray="2 1"/><rect class="sand" x="11" y="9.500" width="36" height="22.500" rx="5"/><path class="sky" d="M22 32a11.500 11.500 0 1 1 15 0z"/><circle class="core" cx="29.500" cy="22.500" r="5.700"/></svg>
          </figure>
          <figure>
            <figcaption>Circle Lock</figcaption>
            <svg viewBox="0 0 58 41"><path class="sand" d="M15 33Q11 33 11 25a18 18 0 0 1 36 0Q47 33 43 33z"/><path class="sky" d="M21 33a11.500 11.500 0 1 1 16 0z"/><circle class="core" cx="29" cy="24.500" r="5.500"/></svg>
          </figure>
          <figure>
            <figcaption>Slot Lock</figcaption>
            <svg viewBox="0 0 58 41"><rect class="sand" x="6" y="12" width="46" height="18" rx="9"/><path class="sky" d="M22 12h14a11.500 11.500 0 0 1 0 18H22a11.500 11.500 0 0 1 0-18z"/><circle class="core" cx="29" cy="21" r="5.500"/></svg>
          </figure>
        </div>
      </section>
    </div>

    <aside class="side">
      <button class="tool"><svg><use href="#setup2"/></svg>Setup</button>
      <button class="tool sep more"><svg><use href="#layout"/></svg>Parting<br>Layout<br>Tools</button>
      <button class="tool more"><svg><use href="#parting"/></svg>Parting</button>
      <button class="tool more"><svg><use href="#gear"/></svg>Parting<br>Analysis<br>Tools</button>
      <button class="tool sep"><svg><use href="#cutact"/></svg>Cut Active</button>
      <button class="tool sep more"><svg><use href="#lifter"/></svg>Lifter</button>
      <button class="tool more"><svg><use href="#insert"/></svg>Insert</button>
      <button class="tool more"><svg><use href="#moldbase"/></svg>Mold Base</button>
      <button class="tool more"><svg><use href="#addmold"/></svg>Add Mold<br>Compon...</button>
      <button class="tool sep more"><svg><use href="#cooling"/></svg>Cooling</button>
      <button class="tool more"><svg><use href="#runner"/></svg>Runner<br>Design</button>
      <button class="tool more"><svg><use href="#eject"/></svg>Ejection</button>
      <button class="tool sep"><svg><use href="#bom"/></svg>BOM</button>
    </aside>
  </main>

  <footer class="status">
    <span></span><span></span><span></span><span></span>
    <span class="file">Ejection_Hsc</span>
    <span>Units: mm</span>
  </footer>
</body>
</html>
```
FILE: styles.css
```
* {
  box-sizing: border-box;
}
body {
  margin: 0;
  height: 100vh;
  display: grid;
  grid-template-rows: auto auto 1fr auto;
  background: #e9eaec;
  color: #3c3c3c;
  font-family: Roboto, "Open Sans", sans-serif;
  font-size: 5px;
  line-height: 6px;
  overflow: hidden;
}
button, input, select {
  font: inherit;
  color: inherit;
  margin: 0;
  padding: 0;
  border: none;
  border-radius: 0;
  background: none;
}
svg {
  display: block;
  flex: none;
}
.defs {
  position: absolute;
  width: 0;
  height: 0;
}

/* title bar */
.titlebar {
  display: flex;
  align-items: center;
  height: 11px;
  padding: 0 4px 0 2px;
}
.quick {
  display: flex;
  align-items: center;
  justify-content: space-between;
  width: 131px;
  margin-right: 6px;
}
.quick svg {
  width: 8px;
  height: 7px;
}
.quick .drop {
  display: flex;
  align-items: center;
}
.quick .drop::after, .floatbar b {
  content: "";
  width: 2px;
  height: 1px;
  background: #555;
}
.menu {
  display: flex;
  gap: 6px;
}
.menu a {
  color: #4c4c4c;
  text-decoration: none;
  white-space: nowrap;
}
.docname {
  display: flex;
  align-items: center;
  gap: 8px;
  margin-left: auto;
  color: #666;
}
.docname svg {
  width: 11px;
  height: 8px;
}
.search {
  display: flex;
  align-items: center;
  width: 27px;
  height: 8px;
  margin: 0 4px 0 96px;
  background: #fff;
}
.search input {
  width: 18px;
  padding-left: 2px;
  line-height: 6px;
}
.search input::placeholder {
  color: #444;
}
.search svg {
  width: 7px;
  height: 7px;
}
.winbtns {
  display: flex;
  gap: 6px;
  color: #222;
}
.winbtns svg, .docbtns svg {
  width: 6px;
  height: 6px;
}

/* ribbon */
.ribbon {
  display: grid;
  grid-template-columns: 66fr 86fr 44fr 30fr 38fr 80fr 87fr 93fr 39fr 50fr 40fr 40fr 58fr 22fr;
  gap: 2px;
  height: 33px;
  padding: 1px 0 3px 4px;
}
.group {
  display: flex;
  justify-content: space-around;
  min-width: 0;
  padding-left: 3px;
  background: #fdfdfd radial-gradient(#aaa 35%, transparent 40%) 1px 2px / 2px 2px no-repeat;
}
.tool {
  position: relative;
  display: flex;
  flex-direction: column;
  align-items: center;
  padding-top: 2px;
  min-width: 0;
  white-space: nowrap;
  text-align: center;
}
.tool svg {
  width: 12px;
  height: 12px;
}
.tool:disabled {
  color: #bbb;
}
.ribbon .more::after {
  content: "";
  margin: auto auto 1px;
  border: 1px solid transparent;
  border-top-color: #333;
  border-bottom: none;
}
.tall svg {
  width: 12px;
  height: 24px;
}
.wide svg {
  width: 27px;
}
.icons {
  display: grid;
  grid-template-columns: auto auto;
  justify-content: center;
  align-content: center;
  gap: 2px 4px;
}
.icons svg, .stack svg {
  width: 12px;
  height: 12px;
}
.annot {
  align-items: center;
}
.colors {
  justify-content: space-between;
  padding: 2px 2px 0 2px;
}
.swatches {
  display: grid;
  grid-template-columns: repeat(4, 6px);
  grid-auto-rows: 6px;
}
.swatches i, .current i {
  border: 1px solid #fdfdfd;
  border-width: 0 1px 1px 0;
}
.red { background: #d81f1f; }
.yellow { background: #f8f400; }
.navy { background: #1616b8; }
.green { background: #18a52c; }
.cyan { background: #18dce6; }
.magenta { background: #d818cc; }
.black { background: #111; }
.p1 { background: #fbe0da; }
.p2 { background: #f7d1cb; }
.p3 { background: #fbf4cd; }
.p4 { background: #eef6dd; }
.p5 { background: #d9f0d6; }
.p6 { background: #cfeeee; }
.p7 { background: #c0dcf2; }
.current i {
  display: block;
  width: 8px;
  height: 8px;
  background: #5c9e28;
}
.current i + i {
  height: 6px;
  background: linear-gradient(#d8782e, #e9d44a 50%, #356fae);
}
.current svg {
  width: 8px;
  height: 9px;
}
.styles {
  display: flex;
  flex-direction: column;
  gap: 1px;
}
.styles svg {
  width: 16px;
  height: 8px;
}
.styles .brush {
  width: 8px;
}
.docbtns {
  display: flex;
  flex-direction: column;
  align-items: flex-end;
  padding-right: 6px;
  color: #678;
}
.docbtns button {
  height: 8px;
}

/* work area */
main {
  display: grid;
  grid-template-columns: 1fr 33px;
  gap: 4px;
  min-height: 0;
  padding-left: 3px;
}
.viewport {
  position: relative;
  overflow: hidden;
  background:
    radial-gradient(ellipse 110px 190px at 51% 94%, rgba(255, 255, 255, .3), transparent),
    radial-gradient(ellipse 260px 240px at 51% 94%, rgba(255, 255, 255, .3), transparent),
    linear-gradient(#636363, #686868 60%, #727272);
}
.scene {
  width: 100%;
  height: 100%;
}
.ring, .ringthick {
  fill: none;
  stroke: #d61ad6;
  stroke-width: 1.3;
}
.ringthick {
  stroke-width: 2;
}
.pin {
  stroke: #15150a;
  stroke-width: 1.3;
}
.thin {
  stroke-width: .5;
}
.dim { fill: #d3d000; }
.bright { fill: #efec18; }
.lit { fill: #fdfb28; }
.tiny {
  fill: #1a1260;
}
.flat {
  fill: #f3b08a;
  stroke: #e0304c;
  stroke-width: .6;
}
.pinlock {
  fill: none;
  stroke: #2bdc3a;
  stroke-width: 1.2;
}
.pinend {
  fill: none;
  stroke: #111;
  stroke-width: 1.5;
}
.leader {
  stroke: #333;
  stroke-width: .5;
}
.mark {
  fill: #e6e6c8;
  stroke: #222;
  stroke-width: .7;
}

/* floating toolbars */
.floatbar {
  position: absolute;
  top: 5px;
  display: flex;
  align-items: center;
  justify-content: space-around;
  height: 11px;
  padding: 0 1px;
  background: #fafafa;
}
.floatbar svg {
  width: 8px;
  height: 8px;
}
.bar1 { left: 124px; width: 70px; }
.bar2 { left: 207px; width: 89px; }
.bar3 { left: 308px; width: 121px; }
.off { color: #555; }
.on { color: #f4dc8a; }
.soft { opacity: .5; }

/* fields */
.sel, .num {
  position: relative;
  display: flex;
  height: 8px;
  border: 1px solid #b4b4b4;
  background: #e6e6e6;
}
.sel select {
  width: 100%;
  padding-left: 1px;
  line-height: 6px;
  appearance: none;
}
.sel svg {
  position: absolute;
  right: 1px;
  top: 1px;
  width: 6px;
  height: 4px;
}
.num {
  background: #fff;
}
.num input {
  flex: 1;
  min-width: 0;
  padding-left: 1px;
}
.num svg {
  width: 4px;
  height: 6px;
}

/* lock boxes next to the ejectors */
.lockbox {
  position: absolute;
  display: flex;
  width: 67px;
  height: 20px;
  border-radius: 1px;
  background: #f1f1f1;
  border: 1px solid #fafafa;
  color: #333;
}
.lockbox .fields {
  width: 44px;
  padding: 1px;
}
.lockbox .pick {
  width: 8px;
  height: 8px;
  margin: 8px 3px 0 1px;
}
.lockbox button {
  flex: 1;
  display: flex;
  justify-content: flex-end;
  align-items: flex-start;
  padding: 0 1px;
  border-left: 1px solid #aaa;
  background: #fafafa;
}
.lockbox button svg {
  width: 4px;
  height: 4px;
}
.lock1 { left: 175px; top: 69px; }
.lock2 { left: 434px; top: 141px; }
.lock3 { left: 317px; top: 217px; }
.lock4 { left: 629px; top: 218px; }
.lock5 { left: 548px; top: 304px; }

/* ejector lock dialog */
.dialog {
  position: absolute;
  top: 10px;
  right: 17px;
  width: 140px;
  background: #f0f0f0;
  border: 1px solid #ddd;
  box-shadow: 0 0 4px #333;
  color: #333;
}
.dialog h2 {
  margin: 0;
  padding: 2px 3px 4px;
  background: #fff;
  font-size: 5px;
  font-weight: normal;
}
.types {
  display: grid;
  grid-template-columns: 5px 1fr 16px 49px;
  align-items: center;
  gap: 4px 2px;
  padding: 7px 1px 0 3px;
  white-space: nowrap;
}
.key {
  height: 8px;
  border: 1px solid #777;
}
.key + span {
  padding-left: 1px;
}
.anglelabel {
  grid-column: 3;
}
.angle {
  width: 31px;
  justify-self: end;
}
.dims {
  display: grid;
  grid-template-columns: 81px 1fr;
  align-items: center;
  padding: 0 2px 4px 3px;
  border-bottom: 1px solid #ddd;
}
.dims label {
  grid-column: 1 / 3;
  padding-bottom: 2px;
}
.dims .sel {
  height: 9px;
}
.pins {
  width: 8px;
  height: 8px;
  justify-self: end;
}
.locks {
  display: grid;
  grid-template-columns: 58px 58px;
  justify-content: space-between;
  gap: 4px;
  padding: 3px 3px 2px;
}
.locks figure {
  margin: 0;
}
.locks figcaption {
  padding-bottom: 4px;
  text-align: center;
}
.locks svg {
  width: 100%;
  background: #fff;
}
.sand { fill: #fbe39c; stroke: #66725e; stroke-width: .5; }
.sky { fill: #b9d3ef; stroke: #4d74a3; stroke-width: .6; }
.core { fill: #2c5096; }

/* side bar */
.side {
  align-self: start;
  display: flex;
  flex-direction: column;
  margin: 1px 2px 0 0;
  padding: 4px 0 6px;
  background: #fdfdfd;
  border-top: 1px solid #e3b98e;
}
.side .tool {
  padding: 2px 0 2px 3px;
}
.side .sep {
  padding-top: 1px;
  border-top: 1px solid #d5d5d5;
}
.side .more::before {
  content: "";
  position: absolute;
  left: 1px;
  bottom: 5px;
  border: 1px solid transparent;
  border-top-color: #444;
  border-bottom: none;
}

/* status bar */
.status {
  display: grid;
  grid-template-columns: 442fr 114fr 43fr 43fr 43fr 84fr 31fr;
  height: 9px;
  border-top: 1px solid #fff;
  background: #ececec;
  color: #333;
  white-space: nowrap;
}
.status span {
  border-left: 1px solid #bbb;
  padding-left: 2px;
}
.status .file {
  grid-column: 5 / 7;
  text-align: center;
}
.status span:first-child {
  border: none;
}
```
